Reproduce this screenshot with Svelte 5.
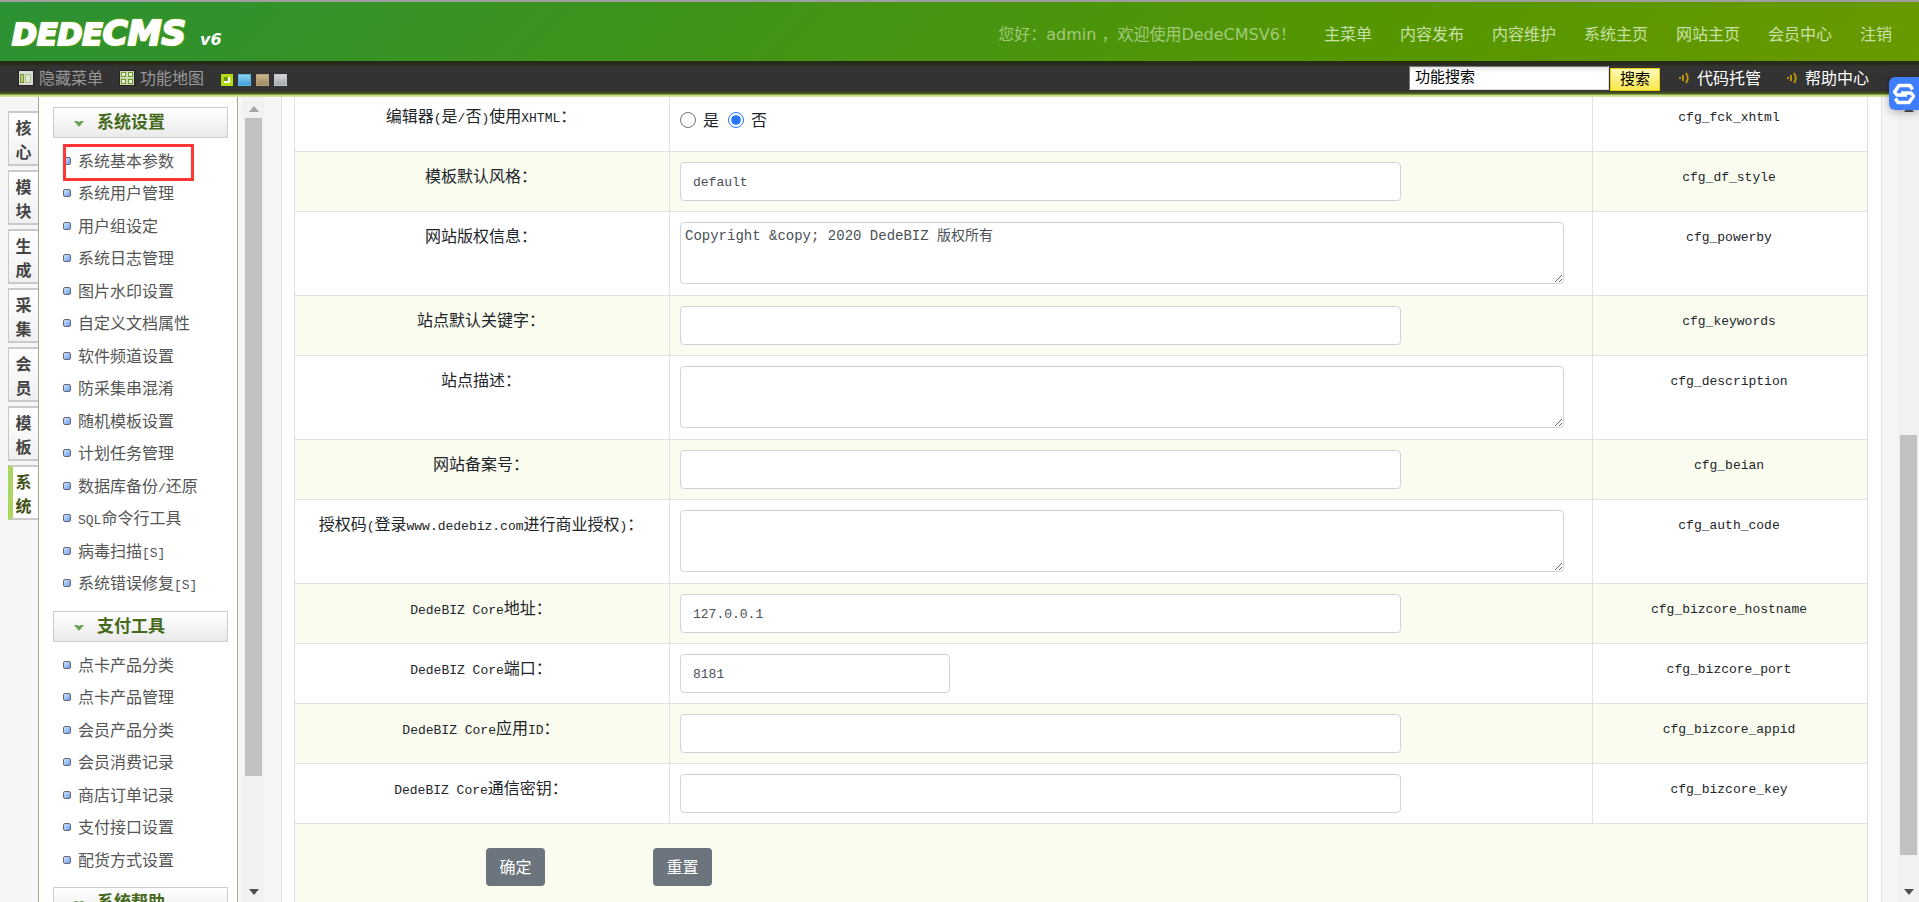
<script>
  const nav = ['主菜单', '内容发布', '内容维护', '系统主页', '网站主页', '会员中心', '注销'];
  const tabs = ['核心', '模块', '生成', '采集', '会员', '模板', '系统'];
  const swatches = ['lime', 'blue', 'tan', 'gray'];
  const menus = [
    {
      title: '系统设置',
      items: ['系统基本参数', '系统用户管理', '用户组设定', '系统日志管理', '图片水印设置', '自定义文档属性', '软件频道设置', '防采集串混淆', '随机模板设置', '计划任务管理', '数据库备份/还原', 'SQL命令行工具', '病毒扫描[S]', '系统错误修复[S]']
    },
    {
      title: '支付工具',
      items: ['点卡产品分类', '点卡产品管理', '会员产品分类', '会员消费记录', '商店订单记录', '支付接口设置', '配货方式设置']
    },
    { title: '系统帮助', items: [] }
  ];
  const rows = [
    { label: '编辑器(是/否)使用XHTML：', name: 'cfg_fck_xhtml', kind: 'radio' },
    { label: '模板默认风格：', name: 'cfg_df_style', kind: 'text', value: 'default' },
    { label: '网站版权信息：', name: 'cfg_powerby', kind: 'area', value: 'Copyright &copy; 2020 DedeBIZ 版权所有' },
    { label: '站点默认关键字：', name: 'cfg_keywords', kind: 'text', value: '' },
    { label: '站点描述：', name: 'cfg_description', kind: 'area', value: '' },
    { label: '网站备案号：', name: 'cfg_beian', kind: 'text', value: '' },
    { label: '授权码(登录www.dedebiz.com进行商业授权)：', name: 'cfg_auth_code', kind: 'area', value: '' },
    { label: 'DedeBIZ Core地址：', name: 'cfg_bizcore_hostname', kind: 'text', value: '127.0.0.1' },
    { label: 'DedeBIZ Core端口：', name: 'cfg_bizcore_port', kind: 'short', value: '8181' },
    { label: 'DedeBIZ Core应用ID：', name: 'cfg_bizcore_appid', kind: 'text', value: '' },
    { label: 'DedeBIZ Core通信密钥：', name: 'cfg_bizcore_key', kind: 'text', value: '' }
  ];
  let xhtml = $state('N');

  // Splits a label into ASCII and CJK runs so each can carry its own size.
  const runs = (text) => text.match(/[\x20-\x7e]+|[^\x20-\x7e]+/g) ?? [];
  const ascii = (run) => /^[\x20-\x7e]/.test(run);
</script>

{#snippet mixed(text)}{#each runs(text) as run}<span class:latin={ascii(run)}>{run}</span>{/each}{/snippet}

{#snippet sound()}
  <svg class="sound" width="12" height="12" viewBox="0 0 12 12" fill="none" stroke="#b8920c" stroke-width="2" aria-hidden="true">
    <path d="M2 5v2" /><path d="M5 3v6" /><path d="M8 1q3.500 5 0 10" />
  </svg>
{/snippet}

<div class="app">
  <header class="top">
    <a class="logo" href="#home"><span class="dede">DEDE</span><span class="cms">CMS</span><span class="ver">v6</span></a>
    <nav>
      <span class="hello">您好：admin ，欢迎使用DedeCMSV6！</span>
      {#each nav as item}<a href="#nav">{item}</a>{/each}
    </nav>
  </header>

  <div class="bar">
    <a class="tool" href="#hide">
      <svg width="16" height="16" viewBox="0 0 16 16" aria-hidden="true">
        <rect width="16" height="16" fill="#222" /><rect x="1" y="1" width="14" height="14" fill="#dcdcdc" />
        <rect x="2" y="4" width="4" height="9" fill="#77991f" /><rect x="3" y="5" width="2" height="7" fill="#b9cf97" />
        <rect x="7" y="4" width="6" height="9" fill="#a9c482" /><rect x="8" y="5" width="4" height="7" fill="#dde8cc" />
      </svg>
      <span>隐藏菜单</span>
    </a>
    <a class="tool" href="#map">
      <svg width="16" height="16" viewBox="0 0 16 16" aria-hidden="true">
        <rect width="16" height="16" fill="#222" /><rect x="1" y="1" width="14" height="14" fill="#ccd8b4" />
        <g fill="#e8efdc" stroke="#6f9a2e"><rect x="2.500" y="2.500" width="4" height="4" /><rect x="9.500" y="2.500" width="4" height="4" /><rect x="2.500" y="9.500" width="4" height="4" /><rect x="9.500" y="9.500" width="4" height="4" /></g>
      </svg>
      <span>功能地图</span>
    </a>
    <div class="swatches">
      {#each swatches as s}<button class={s} aria-label="skin {s}"></button>{/each}
    </div>
    <form class="search" onsubmit={(e) => e.preventDefault()}>
      <input type="text" value="功能搜索" aria-label="功能搜索" />
      <button>搜索</button>
    </form>
    <a class="help" href="#code">{@render sound()}<span>代码托管</span></a>
    <a class="help" href="#help">{@render sound()}<span>帮助中心</span></a>
  </div>

  <div class="body">
    <div class="tabs">
      {#each tabs as tab}
        <button class:on={tab === '系统'}>{#each tab as ch}<span>{ch}</span>{/each}</button>
      {/each}
    </div>

    <aside>
      {#each menus as menu, m}
        <section>
          <h2>
            <svg width="10" height="6" viewBox="0 0 10 6" aria-hidden="true"><path d="M0 0h3l2 1 2-1h3L5 6z" fill="#69a356" /></svg>
            {menu.title}
          </h2>
          <ul>
            {#each menu.items as item, i}
              <li class:marked={m === 0 && i === 0}><a href="#menu"><i></i><span class="item">{@render mixed(item)}</span></a></li>
            {/each}
          </ul>
        </section>
      {/each}
    </aside>

    <div class="scroll left" aria-hidden="true">
      <svg width="10" height="6" viewBox="0 0 10 6"><path d="M0 6h10L5 0z" fill="#a3a3a3" /></svg>
      <div class="track"><div class="thumb"></div></div>
      <svg width="10" height="6" viewBox="0 0 10 6"><path d="M0 0h10L5 6z" fill="#505050" /></svg>
    </div>

    <main>
      <div class="card">
        <table>
          <colgroup><col class="c1" /><col /><col class="c3" /></colgroup>
          <tbody>
            {#each rows as row}
              <tr class:tall={row.kind === 'area'}>
                <td class="label"><label for={row.name}>{@render mixed(row.label)}</label></td>
                <td class="field">
                  {#if row.kind === 'radio'}
                    <div class="radios">
                      <input id={row.name} type="radio" value="Y" bind:group={xhtml} aria-label="是" /><span>是</span>
                      <input type="radio" value="N" bind:group={xhtml} aria-label="否" /><span>否</span>
                    </div>
                  {:else if row.kind === 'area'}
                    <textarea id={row.name} value={row.value}></textarea>
                  {:else}
                    <input id={row.name} class="text" class:short={row.kind === 'short'} type="text" value={row.value} />
                  {/if}
                </td>
                <td class="name">{row.name}</td>
              </tr>
            {/each}
            <tr>
              <td class="actions" colspan="3"><div><button>确定</button><button>重置</button></div></td>
            </tr>
          </tbody>
        </table>
      </div>
    </main>

    <div class="scroll right" aria-hidden="true">
      <svg width="10" height="6" viewBox="0 0 10 6"><path d="M0 6h10L5 0z" fill="#505050" /></svg>
      <div class="track"><div class="thumb"></div></div>
      <svg width="10" height="6" viewBox="0 0 10 6"><path d="M0 0h10L5 6z" fill="#505050" /></svg>
    </div>
  </div>

  <button class="float" aria-label="assistant">
    <svg width="24" height="22" viewBox="0 0 24 22" fill="none" stroke="#fff" stroke-width="3.500" stroke-linejoin="round" aria-hidden="true">
      <path d="M20.500 6.500L18 2.500H7L2.500 9L5 12H15" /><path d="M3.500 15.500L6 19.500H17L21.500 13L19 10H9" />
    </svg>
  </button>
</div>

<style>
  :global(body) { margin: 0; overflow: hidden; }
  .app {
    height: 100vh; display: flex; flex-direction: column; position: relative; overflow: hidden;
    background: #f6f6f6; color: #212529; font: 16px/24px "Liberation Mono", "Noto Sans CJK SC", sans-serif;
  }
  * { box-sizing: border-box; }
  a { color: inherit; text-decoration: none; }
  button, input, textarea { font: inherit; }
  .latin { font-size: 13px; }

  .top {
    flex: none; height: 61px; border-top: 2px solid #a09ea0; padding: 0 27px 0 12px;
    display: flex; align-items: center; justify-content: space-between;
    background: linear-gradient(135deg, #2a9134, #559600 72%, #6a9900);
    font-family: "DejaVu Sans", "Noto Sans CJK SC", sans-serif;
  }
  .logo { display: flex; align-items: baseline; padding-top: 4px; color: #fff; font-weight: bold; font-style: italic; }
  .dede, .cms { -webkit-text-stroke: 2px #fff; text-shadow: 0 0 3px #8fb800, 0 0 3px #8fb800, 0 0 2px #8fb800; }
  .dede { font-size: 30px; line-height: 40px; }
  .cms { font-size: 34px; line-height: 40px; }
  .ver { font-size: 16px; margin-left: 14px; }
  .top nav { display: flex; gap: 28px; padding-top: 7px; color: #c9e0a6; white-space: nowrap; }
  .hello { color: #a3ca7c; }

  .bar {
    flex: none; height: 36px; padding: 3px 50px 5px 18px; display: flex; align-items: center;
    color: #999; white-space: nowrap;
    background: linear-gradient(#262b17 0 3px, #333 5px 30px, #3c4520 31px, #516a1c 33px, #c2da7c 34px, #d9e8ae 36px);
  }
  .tool { display: flex; align-items: center; gap: 5px; margin-right: 16px; }
  .tool span, .help span { padding-top: 4px; }
  .swatches { display: flex; gap: 5px; margin-left: 1px; padding-top: 4px; }
  .swatches button { width: 12px; height: 12px; padding: 0; border: 1px solid; }
  .swatches button + button { width: 13px; }
  .swatches .lime { background: #6f9410; border: 3px solid #b4dc14; box-shadow: inset -1px -1px 0 1px #fff; }
  .swatches .blue { background: linear-gradient(#8fd3ee, #3f9fd8); border-color: #58b8e4; }
  .swatches .tan { background: linear-gradient(#c9b78a, #9d8a66); border-color: #b5a279; }
  .swatches .gray { background: linear-gradient(#d4d7da, #a2a8ad); border-color: #c2c6ca; }
  .search { display: flex; align-items: center; margin-left: auto; gap: 1px; font-size: 15px; }
  .search input {
    width: 200px; height: 24px; padding: 2px 5px 0; border: 1px solid; border-color: #777 #ddd #ddd #777;
    background: linear-gradient(#e4e4e4, #fff 5px); color: #000;
  }
  .search button {
    width: 50px; height: 23px; padding: 2px 0 0; margin-top: 2px; line-height: 20px; border: 1px solid #e6cf0a;
    background: linear-gradient(#fff9b8, #fbe64e); color: #000;
  }
  .help { display: flex; align-items: center; gap: 7px; margin-left: 25px; color: #fff; }
  .search + .help { margin-left: 18px; }

  .body { flex: 1; min-height: 0; display: flex; }
  .tabs { width: 38px; padding: 14px 0 0 8px; display: flex; flex-direction: column; gap: 4px; flex: none; }
  .tabs button {
    height: 55px; padding: 5px 0 0; display: flex; flex-direction: column; align-items: center;
    border: 2px solid #c9c9c9; border-left-width: 1px; border-right: 0; background: linear-gradient(#fff, #f0f0f0);
    color: #444; font-weight: bold; line-height: 24px;
  }
  .tabs .on { border-left: 5px solid #acd65f; background: #fff; color: #3e5013; padding-right: 4px; }

  aside {
    width: 200px; flex: none; background: #fff; border: solid #a5a990; border-width: 0 1px; padding: 10px 9px 0 14px;
    overflow: hidden; color: #555; white-space: nowrap;
  }
  h2 {
    margin: 0; height: 31px; padding: 2px 0 0 20px; display: flex; align-items: center; gap: 13px;
    border: 1px solid #ccc; background: linear-gradient(#fff, #eaeaea); color: #466a1c; font-size: 17px; line-height: 27px;
  }
  ul { list-style: none; margin: 0; padding: 7px 0 11px 10px; }
  li { position: relative; height: 32px; }
  li:nth-child(even) { height: 33px; }
  li a { display: flex; align-items: center; gap: 7px; height: 32px; }
  li i { width: 8px; height: 8px; border: 1px solid #667; border-radius: 2px; background: linear-gradient(135deg, #cfe2ff, #6ea0ee); }
  .item { padding-top: 4px; line-height: 28px; }
  .marked::after {
    content: ""; box-sizing: border-box; position: absolute; left: 0; top: -1px; width: 131px; height: 37px; border: 3px solid #ff3636;
  }

  .scroll { flex: none; width: 21px; background: #f1f1f1; display: flex; flex-direction: column; align-items: center; padding: 9px 0 7px; }
  .scroll .track { flex: 1; align-self: stretch; display: flex; flex-direction: column; margin: 6px 2px; }
  .thumb { background: #c1c1c1; }
  .left { margin-left: 5px; }
  .left .thumb { flex: 0 0 86%; }
  .right { padding-top: 9px; }
  .right .track { justify-content: flex-end; padding-bottom: 28px; }
  .right .thumb { flex: 0 0 57%; }

  main { flex: 1; min-width: 0; padding: 0 16px 0 17px; overflow: hidden; }
  .card { display: flow-root; background: #fff; border: solid #dee2e6; border-width: 0 1px; padding: 0 13px 0 12px; height: 100%; }
  table { width: 100%; border-collapse: collapse; table-layout: fixed; margin-top: -6px; }
  .c1 { width: 375px; }
  .c3 { width: 275px; }
  tr { height: 60px; background: #fff; }
  tr.tall { height: 84px; }
  tr:nth-child(even) { background: #f9fcef; }
  td { border: 1px solid #dee2e6; padding: 10px 10px 9px; vertical-align: top; }
  td.label, td.name { padding: 14px 13px 0 11px; text-align: center; }
  .name { font-size: 13px; }
  .text, textarea { display: block; border: 1px solid #ced4da; border-radius: 4px; background: #fff; color: #495057; }
  .text { width: 721px; max-width: 100%; height: 39px; padding: 2px 12px 0; font-size: 13px; }
  .short { width: 270px; }
  textarea { width: calc(100% - 18px); height: 62px; padding: 1px 4px; font-size: 14px; line-height: 24px; }
  .radios { display: flex; align-items: center; height: 37px; }
  .radios input { width: 16px; height: 16px; margin: 0 7px 2px 0; accent-color: #2478ff; }
  .radios span { margin-right: 9px; padding-top: 3px; }
  .actions { height: 110px; padding: 24px 0 0 191px; background: #f9fcef; }
  .actions div { display: flex; gap: 108px; }
  .actions button { width: 59px; height: 38px; padding: 3px 0 0; border: 0; border-radius: 4px; background: #6c757d; color: #fff; }

  .float {
    position: absolute; right: 0; top: 77px; width: 30px; height: 33px; padding: 0; border: 0; border-radius: 6px 0 0 6px;
    background: #3f7eff; display: grid; place-items: center; box-shadow: 0 2px 8px rgba(0, 0, 0, 0.3);
  }
</style>
